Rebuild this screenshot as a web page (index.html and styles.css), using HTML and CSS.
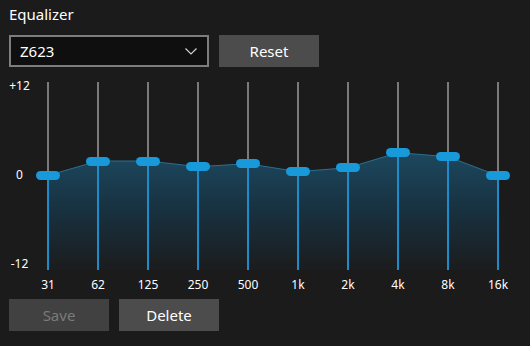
FILE: index.html
```html
<!DOCTYPE html>
<html>
<head>
<meta charset="utf-8">
<link rel="stylesheet" href="styles.css">
</head>
<body>
<div class="app">
  <div class="title">Equalizer</div>
  <div class="toolbar">
    <div class="select">
      <span>Z623</span>
      <svg class="chev" width="12" height="7" viewBox="0 0 12 7"><path d="M0.5 0.5 L6 6 L11.5 0.5" fill="none" stroke="#cfcfcf" stroke-width="1.2"/></svg>
    </div>
    <button class="btn">Reset</button>
  </div>
  <div class="chart">
    <svg class="area" width="530" height="188" viewBox="0 0 530 188">
      <defs>
        <linearGradient id="g" x1="0" y1="65" x2="0" y2="188" gradientUnits="userSpaceOnUse">
          <stop offset="0" stop-color="#1d4a62"/>
          <stop offset="0.45" stop-color="#183444"/>
          <stop offset="1" stop-color="#1b1c1d"/>
        </linearGradient>
      </defs>
      <path d="M48 93.5 L98 79 L148 79 L198 84.7 L248 81.7 L298 89.7 L348 85.7 L398 70.7 L448 74.7 L498 93.7 L498 188 L48 188 Z" fill="url(#g)"/>
      <path d="M48 93.5 L98 79 L148 79 L198 84.7 L248 81.7 L298 89.7 L348 85.7 L398 70.7 L448 74.7 L498 93.7" fill="none" stroke="#2b6f91" stroke-width="1"/>
    </svg>
    <div class="axis"><span>+12</span><span>0</span><span>-12</span></div>
    <div class="sliders">
      <div class="slider"><div class="low" style="top:93.5px"></div><div class="thumb" style="top:93.5px"></div></div>
      <div class="slider"><div class="low" style="top:79px"></div><div class="thumb" style="top:79px"></div></div>
      <div class="slider"><div class="low" style="top:79px"></div><div class="thumb" style="top:79px"></div></div>
      <div class="slider"><div class="low" style="top:84.7px"></div><div class="thumb" style="top:84.7px"></div></div>
      <div class="slider"><div class="low" style="top:81.7px"></div><div class="thumb" style="top:81.7px"></div></div>
      <div class="slider"><div class="low" style="top:89.7px"></div><div class="thumb" style="top:89.7px"></div></div>
      <div class="slider"><div class="low" style="top:85.7px"></div><div class="thumb" style="top:85.7px"></div></div>
      <div class="slider"><div class="low" style="top:70.7px"></div><div class="thumb" style="top:70.7px"></div></div>
      <div class="slider"><div class="low" style="top:74.7px"></div><div class="thumb" style="top:74.7px"></div></div>
      <div class="slider"><div class="low" style="top:93.7px"></div><div class="thumb" style="top:93.7px"></div></div>
    </div>
  </div>
  <div class="freqs">
    <span>31</span><span>62</span><span>125</span><span>250</span><span>500</span><span>1k</span><span>2k</span><span>4k</span><span>8k</span><span>16k</span>
  </div>
  <div class="actions">
    <button class="btn disabled">Save</button>
    <button class="btn">Delete</button>
  </div>
</div>
</body>
</html>
```
FILE: styles.css
```css
html, body {
  margin: 0;
  padding: 0;
  background: #1b1b1b;
  color: #ffffff;
  font-family: "Noto Sans", "Open Sans", sans-serif;
}
.app {
  padding: 4px 0 0 9px;
}
.title {
  font-size: 15px;
  line-height: 20px;
  height: 20px;
}
.toolbar {
  display: flex;
  gap: 10px;
  margin-top: 11px;
}
.select {
  box-sizing: border-box;
  width: 200px;
  height: 32px;
  border: 2px solid #7d7d7d;
  background: #0f0f0f;
  display: flex;
  align-items: center;
  justify-content: space-between;
  padding: 0 10px 0 9px;
  font-size: 15px;
}
.chev {
  display: block;
}
.btn {
  box-sizing: border-box;
  width: 100px;
  height: 32px;
  border: none;
  background: #4c4c4c;
  color: #ffffff;
  font-family: inherit;
  font-size: 15px;
  padding: 0;
}
.btn.disabled {
  background: #414141;
  color: #7a7a7a;
}
.chart {
  position: relative;
  margin-top: 15px;
  margin-left: -9px;
  height: 188px;
  display: flex;
  padding-left: 9px;
}
.area {
  position: absolute;
  left: 0;
  top: 0;
}
.axis {
  position: relative;
  width: 21px;
  height: 192px;
  margin-top: -3px;
  display: flex;
  flex-direction: column;
  justify-content: space-between;
  align-items: center;
  font-size: 12px;
  line-height: 14px;
}
.sliders {
  position: relative;
  display: flex;
  gap: 14px;
}
.slider {
  position: relative;
  width: 36px;
  height: 188px;
}
.slider::before {
  content: "";
  position: absolute;
  left: 17px;
  top: 0;
  bottom: 0;
  width: 2px;
  background: #7a7a7a;
}
.low {
  position: absolute;
  left: 17px;
  bottom: 0;
  width: 2px;
  background: #1d8ccb;
}
.thumb {
  position: absolute;
  left: 6px;
  width: 24px;
  height: 9px;
  margin-top: -4.5px;
  border-radius: 5px;
  background: #1799da;
}
.freqs {
  display: flex;
  gap: 14px;
  padding-left: 21px;
  margin-top: 7px;
  font-size: 12px;
  line-height: 16px;
}
.freqs span {
  width: 36px;
  text-align: center;
}
.actions {
  display: flex;
  gap: 10px;
  margin-top: 6px;
}
```
